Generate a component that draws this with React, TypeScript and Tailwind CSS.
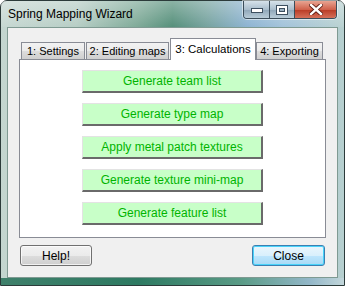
import React from "react";

const actions = [
  "Generate team list",
  "Generate type map",
  "Apply metal patch textures",
  "Generate texture mini-map",
  "Generate feature list",
];

const tabs = [
  { label: "1: Settings", w: "w-[64px]" },
  { label: "2: Editing maps", w: "w-[83px]" },
  { label: "3: Calculations", w: "w-[86px]", active: true },
  { label: "4: Exporting", w: "w-[67px]" },
];

function CaptionButtons() {
  return (
    <div className="mr-[7px] flex h-[18px] overflow-hidden rounded-b-[4px] border border-t-0 border-[#3b4d5a] shadow-[0_0_0_1px_rgba(255,255,255,0.5)]">
      <div className="flex w-[26px] items-center justify-center border-r border-[#3b4d5a] bg-[linear-gradient(to_bottom,#d6e2ea,#a9bdcc_50%,#8ea6b8_51%,#b9ccd8)]">
        <svg width="12" height="6" viewBox="0 0 12 6">
          <rect x="0.5" y="1.5" width="11" height="4" fill="#fff" stroke="#3d4f5f" />
        </svg>
      </div>
      <div className="flex w-[25px] items-center justify-center border-r border-[#3b4d5a] bg-[linear-gradient(to_bottom,#d6e2ea,#a9bdcc_50%,#8ea6b8_51%,#b9ccd8)]">
        <svg width="12" height="10" viewBox="0 0 12 10">
          <rect x="0.5" y="0.5" width="11" height="9" fill="#fff" stroke="#3d4f5f" />
          <rect x="3.5" y="3.5" width="5" height="3" fill="#9fb4c4" stroke="#3d4f5f" />
        </svg>
      </div>
      <div className="flex w-[41px] items-center justify-center bg-[linear-gradient(to_bottom,#e8a492,#d0624c_50%,#b93a24_51%,#d5705a)]">
        <svg width="14" height="11" viewBox="0 0 14 11">
          <path
            d="M2 1 L12 10 M12 1 L2 10"
            stroke="#5a1a10"
            strokeWidth="4.2"
            strokeLinecap="square"
          />
          <path
            d="M2 1 L12 10 M12 1 L2 10"
            stroke="#ffffff"
            strokeWidth="2.4"
            strokeLinecap="square"
          />
        </svg>
      </div>
    </div>
  );
}

export default function App() {
  return (
    <div
      className="h-[286px] w-[345px] overflow-hidden bg-white"
      style={{ fontFamily: '"Liberation Sans", Arial, sans-serif' }}
    >
      <div className="flex h-full w-full flex-col rounded-t-[7px] border border-[#2c3b3a] bg-[linear-gradient(to_right,#c4d6d0_0%,#b3cbc2_22%,#77a592_40%,#4d8a74_50%,#6f9e9a_60%,#88b0d0_72%,#9ec0d8_82%,#b7d0cf_100%)]">
        <div className="flex h-[26px] items-start bg-[linear-gradient(to_bottom,rgba(255,255,255,0.35),rgba(255,255,255,0.05))]">
          <div className="pl-[7px] pt-[6px] text-[12px] leading-[15px] text-black">
            Spring Mapping Wizard
          </div>
          <div className="flex-1" />
          <CaptionButtons />
        </div>

        <div className="mx-[6px] flex flex-1 flex-col border border-[#7f9a92] bg-[#f0f0f0] text-[12px] text-black">
          <div className="pl-[11px] pt-[11px]">
            <div className="flex h-[20px] items-end whitespace-nowrap pl-[2px] text-[11px]">
              {tabs.map((t) =>
                t.active ? (
                  <div
                    key={t.label}
                    className={`${t.w} relative z-10 -mb-px h-[22px] border border-b-0 border-[#898c95] bg-white pt-[3px] text-center text-[11.5px] leading-[15px]`}
                  >
                    {t.label}
                  </div>
                ) : (
                  <div
                    key={t.label}
                    className={`${t.w} mr-px h-[17px] border border-b-0 border-[#898c95] bg-[linear-gradient(to_bottom,#f2f2f2,#ebebeb_50%,#dddddd_51%,#cfcfcf)] pt-[1px] text-center leading-[15px]`}
                  >
                    {t.label}
                  </div>
                )
              )}
            </div>
            <div className="flex h-[179px] w-[307px] flex-col items-center gap-[10px] border border-[#898c95] bg-white pt-[10px]">
              {actions.map((a) => (
                <div
                  key={a}
                  className="flex h-[23px] w-[181px] items-center justify-center border-t border-l border-r-2 border-b-2 border-t-[#e3e3e3] border-l-[#e3e3e3] border-r-[#6a6a6a] border-b-[#6a6a6a] bg-[#c8ffc8] text-[12px] text-[#00b400]"
                >
                  {a}
                </div>
              ))}
            </div>
          </div>
          <div className="mt-[7px] flex justify-between pl-[12px] pr-[12px]">
            <div className="flex h-[21px] w-[72px] items-center justify-center rounded-[3px] border border-[#707070] bg-[linear-gradient(to_bottom,#f2f2f2,#ebebeb_50%,#dddddd_51%,#cfcfcf)] shadow-[inset_0_0_0_1px_rgba(255,255,255,0.7)]">
              Help!
            </div>
            <div className="flex h-[21px] w-[73px] items-center justify-center rounded-[3px] border border-[#3c7fb1] bg-[linear-gradient(to_bottom,#eaf6fd,#d9f0fc_50%,#bee6fd_51%,#a7d9f5)] shadow-[inset_0_0_0_1px_#48d3fa]">
              Close
            </div>
          </div>
        </div>
        <div className="h-[7px] bg-[linear-gradient(to_right,#3f806b,#2e7a62_40%,#5a9b86_70%,#93b7c8_90%,#c2d6da)]" />
      </div>
    </div>
  );
}
